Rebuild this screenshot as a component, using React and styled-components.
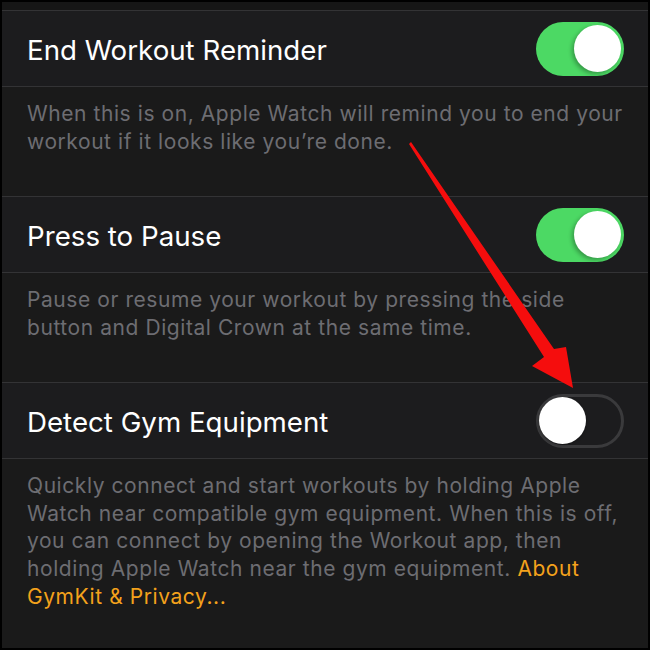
import React from 'react'
import styled, { createGlobalStyle } from 'styled-components'

const GlobalStyle = createGlobalStyle`
  html, body {
    margin: 0;
    padding: 0;
    background: #000;
  }
`

const settings = [
  {
    title: 'End Workout Reminder',
    on: true,
    lines: [
      'When this is on, Apple Watch will remind you to end your',
      'workout if it looks like you\u2019re done.',
    ],
  },
  {
    title: 'Press to Pause',
    on: true,
    lines: [
      'Pause or resume your workout by pressing the side',
      'button and Digital Crown at the same time.',
    ],
  },
  {
    title: 'Detect Gym Equipment',
    on: false,
    lines: [
      'Quickly connect and start workouts by holding Apple',
      'Watch near compatible gym equipment. When this is off,',
      'you can connect by opening the Workout app, then',
    ],
    last: true,
  },
]

const App = () => {
  return (
    <>
      <GlobalStyle />
      <Screen>
        <TopGap />
        {settings.map((s) => (
          <Group key={s.title} $last={s.last}>
            <Row>
              <Title>{s.title}</Title>
              <Toggle $on={s.on}>
                <Knob $on={s.on} />
              </Toggle>
            </Row>
            <Footer $last={s.last}>
              {s.lines.map((l) => (
                <Line key={l}>{l}</Line>
              ))}
              {s.last && (
                <>
                  <Line>
                    holding Apple Watch near the gym equipment. <Link>About</Link>
                  </Line>
                  <Line>
                    <Link>GymKit &amp; Privacy...</Link>
                  </Line>
                </>
              )}
            </Footer>
          </Group>
        ))}
        <Arrow viewBox="0 0 650 650">
          <polygon
            points="411,142 554,349 566,347 573,388 532,366 544,357 409,144"
            fill="#f50d0d"
          />
        </Arrow>
      </Screen>
    </>
  )
}

export default App

const Screen = styled.div`
  position: relative;
  width: 650px;
  height: 650px;
  box-sizing: border-box;
  border: 2px solid #000;
  background: #1a1a1a;
  display: flex;
  flex-direction: column;
  overflow: hidden;
  font-family: Inter, "Liberation Sans", sans-serif;
`

const TopGap = styled.div`
  height: 8px;
  background: #161616;
  border-bottom: 1px solid #333335;
`

const Group = styled.div`
  display: flex;
  flex-direction: column;
  flex: ${(p) => (p.$last ? 1 : 'none')};
`

const Row = styled.div`
  height: 75px;
  display: flex;
  align-items: center;
  justify-content: space-between;
  padding: 0 24px 0 25px;
  background: #1c1c1e;
  border-bottom: 1px solid #333335;
`

const Title = styled.div`
  color: #fff;
  font-size: 27.7px;
  font-weight: 400;
  padding-top: 2px;
`

const Toggle = styled.div`
  position: relative;
  width: 88px;
  height: 54px;
  box-sizing: border-box;
  border-radius: 27px;
  background: ${(p) => (p.$on ? '#4cd964' : 'transparent')};
  border: ${(p) => (p.$on ? 'none' : '3px solid #3a3a3c')};
  display: flex;
  align-items: center;
  justify-content: ${(p) => (p.$on ? 'flex-end' : 'flex-start')};
  padding: ${(p) => (p.$on ? '0 3px' : '0')};
`

const Knob = styled.div`
  width: 47px;
  height: 47px;
  border-radius: 50%;
  background: #fff;
  box-shadow: ${(p) =>
    p.$on ? '-2px 2px 4px rgba(0,0,0,0.3)' : '0 1px 3px rgba(0,0,0,0.3)'};
`

const Footer = styled.div`
  height: ${(p) => (p.$last ? 'auto' : '110px')};
  flex: ${(p) => (p.$last ? 1 : 'none')};
  box-sizing: border-box;
  padding: 13px 24px 0 25px;
  border-bottom: ${(p) => (p.$last ? 'none' : '1px solid #333335')};
`

const Line = styled.div`
  color: #6d6d72;
  font-size: 21px;
  line-height: 27.7px;
  letter-spacing: 0.57px;
  white-space: nowrap;
`

const Link = styled.span`
  color: #f4a21c;
`

const Arrow = styled.svg`
  position: absolute;
  left: -2px;
  top: -2px;
  width: 650px;
  height: 650px;
  pointer-events: none;
`
